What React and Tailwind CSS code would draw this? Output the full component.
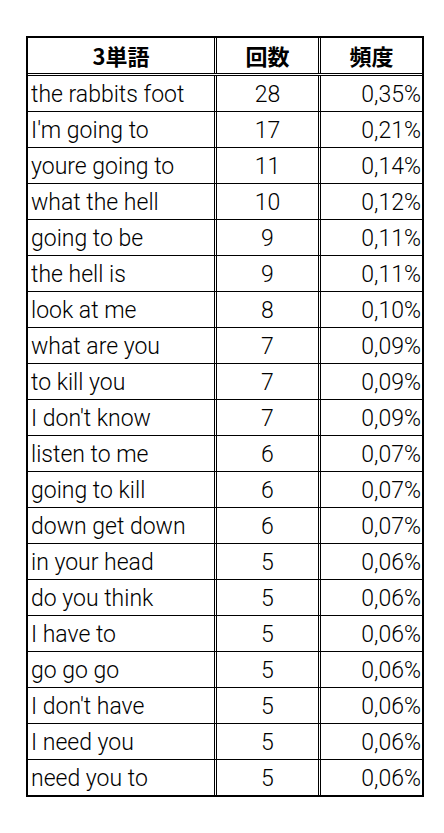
const rows = [
  ['the rabbits foot', '28', '0,35%'],
  ["I'm going to", '17', '0,21%'],
  ['youre going to', '11', '0,14%'],
  ['what the hell', '10', '0,12%'],
  ['going to be', '9', '0,11%'],
  ['the hell is', '9', '0,11%'],
  ['look at me', '8', '0,10%'],
  ['what are you', '7', '0,09%'],
  ['to kill you', '7', '0,09%'],
  ["I don't know", '7', '0,09%'],
  ['listen to me', '6', '0,07%'],
  ['going to kill', '6', '0,07%'],
  ['down get down', '6', '0,07%'],
  ['in your head', '5', '0,06%'],
  ['do you think', '5', '0,06%'],
  ['I have to', '5', '0,06%'],
  ['go go go', '5', '0,06%'],
  ["I don't have", '5', '0,06%'],
  ['I need you', '5', '0,06%'],
  ['need you to', '5', '0,06%'],
]

const font = { fontFamily: 'Roboto, "Noto Sans CJK JP", sans-serif' }

export default function App() {
  return (
    <div className="min-h-screen bg-white pt-[36px] pl-[26px]">
      <div
        className="w-[398px] border-2 border-black text-black"
        style={font}
      >
        <div className="grid grid-cols-[186px_104px_104px] h-[38px] border-b-[3px] border-double border-black font-bold text-[22px] [font-family:'Noto_Sans_CJK_JP',sans-serif]">
          <div className="flex items-center justify-center">3単語</div>
          <div className="flex items-center justify-center border-l-[3px] border-double border-black">回数</div>
          <div className="flex items-center justify-center border-l-[3px] border-double border-black">頻度</div>
        </div>
        {rows.map((r, i) => (
          <div
            key={i}
            className={`grid grid-cols-[186px_104px_104px] text-[23px] font-light leading-none ${i < rows.length - 1 ? 'h-[36px] border-b border-black' : 'h-[35px]'}`}
          >
            <div className="flex items-center pl-[3px] pt-[1px]">{r[0]}</div>
            <div className="flex items-center justify-center pt-[1px] border-l-[3px] border-double border-black">{r[1]}</div>
            <div className="flex items-center justify-end pr-[1px] pt-[1px] border-l-[3px] border-double border-black">{r[2]}</div>
          </div>
        ))}
      </div>
    </div>
  )
}
